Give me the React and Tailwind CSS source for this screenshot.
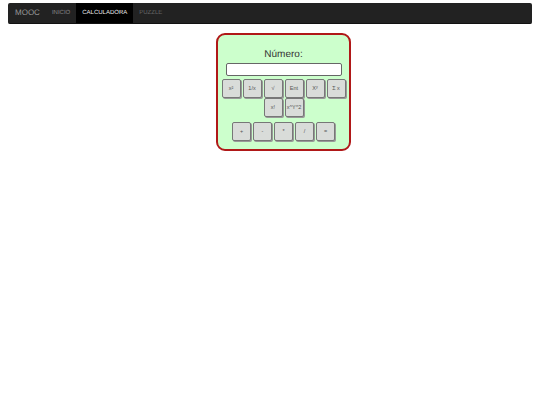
import React from 'react';

const Key = ({ children }) => (
  <button className="w-[19px] h-[19px] flex items-center justify-center rounded-[2px] border border-[#777] bg-[#d9dcd9] text-[5.5px] text-[#555] shadow-[1px_1px_0_#999]">
    {children}
  </button>
);

const App = () => {
  return (
    <div className="min-h-[405px] bg-white antialiased [text-rendering:geometricPrecision] font-['Liberation_Sans',Arial,sans-serif]">
      <div className="pt-[3px] px-[8px]">
        <nav className="h-[21px] flex items-center bg-[#222] rounded-[2px] border-b border-[#111] text-[6px]">
          <span className="pl-[7px] pr-[12px] text-[8px] text-[#999]">MOOC</span>
          <a className="pr-[6px] h-full flex items-center text-[#888]">INICIO</a>
          <a className="px-[6px] h-full flex items-center bg-black text-[#eee]">CALCULADORA</a>
          <a className="px-[6px] h-full flex items-center text-[#666]">PUZZLE</a>
        </nav>
      </div>
      <div className="flex justify-center mt-[9px] pl-[27px]">
        <div className="w-[135px] h-[118px] rounded-[9px] border-2 border-[#b01818] bg-[#ccffcc] flex flex-col items-center pt-[13px]">
          <div className="text-[10px] text-[#333] leading-[13px]">Número:</div>
          <input className="mt-[2px] w-[116px] h-[13px] rounded-[2px] border border-[#666] bg-white" />
          <div className="mt-[3px] flex gap-[2px]">
            {['x²', '1/x', '√', 'Ent', 'Xʸ', 'Σ x'].map(k => <Key key={k}>{k}</Key>)}
          </div>
          <div className="flex gap-[2px]">
            <Key>x!</Key>
            <Key>x^Y^2</Key>
          </div>
          <div className="mt-[5px] flex gap-[2px]">
            {['+', '-', '*', '/', '='].map(k => <Key key={k}>{k}</Key>)}
          </div>
        </div>
      </div>
    </div>
  );
};

export default App;
